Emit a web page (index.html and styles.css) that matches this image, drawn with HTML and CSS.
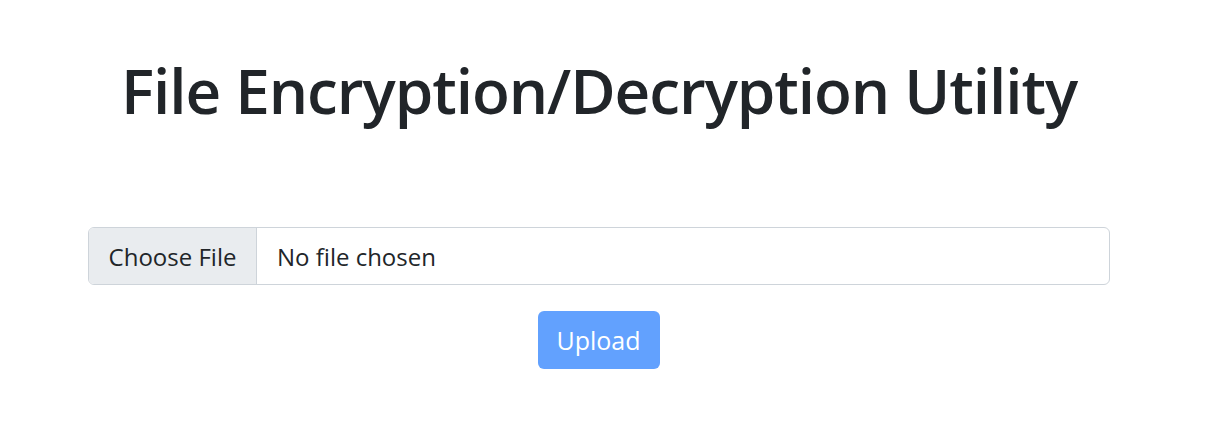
FILE: index.html
```html
<!DOCTYPE html>
<html lang="en">
<head>
<meta charset="utf-8">
<title>File Encryption/Decryption Utility</title>
<link rel="stylesheet" href="styles.css">
</head>
<body>
<main class="container">
  <h1 class="title">File Encryption/Decryption Utility</h1>
  <form class="upload-form">
    <div class="file-input">
      <span class="file-btn">Choose File</span>
      <span class="file-name">No file chosen</span>
    </div>
    <div class="actions">
      <button type="button" class="btn-upload" disabled>Upload</button>
    </div>
  </form>
</main>
</body>
</html>
```
FILE: styles.css
```css
html, body {
  margin: 0;
  padding: 0;
  background: #fff;
}
body {
  font-family: "Open Sans", "Noto Sans", sans-serif;
  color: #212529;
}
.container {
  width: 1022px;
  margin-left: 88px;
  padding-top: 53px;
}
.title {
  margin: 0;
  text-align: center;
  font-size: 62px;
  font-weight: 600;
  line-height: 1.2;
  letter-spacing: -1.05px;
}
.upload-form {
  margin-top: 100px;
  display: flex;
  flex-direction: column;
}
.file-input {
  display: flex;
  height: 58px;
  border: 1px solid #ced4da;
  border-radius: 6px;
  overflow: hidden;
  box-sizing: border-box;
  font-size: 24px;
}
.file-btn {
  display: flex;
  align-items: center;
  background: #e9ecef;
  border-right: 1px solid #ced4da;
  width: 168px;
  box-sizing: border-box;
  justify-content: center;
}
.file-name {
  display: flex;
  align-items: center;
  padding-left: 20px;
}
.actions {
  display: flex;
  justify-content: center;
  margin-top: 26px;
}
.btn-upload {
  width: 122px;
  height: 58px;
  border: none;
  border-radius: 6px;
  background: #62a1fe;
  color: #fff;
  font-family: inherit;
  font-size: 25px;
  padding: 0;
  margin-right: 1px;
}
```
